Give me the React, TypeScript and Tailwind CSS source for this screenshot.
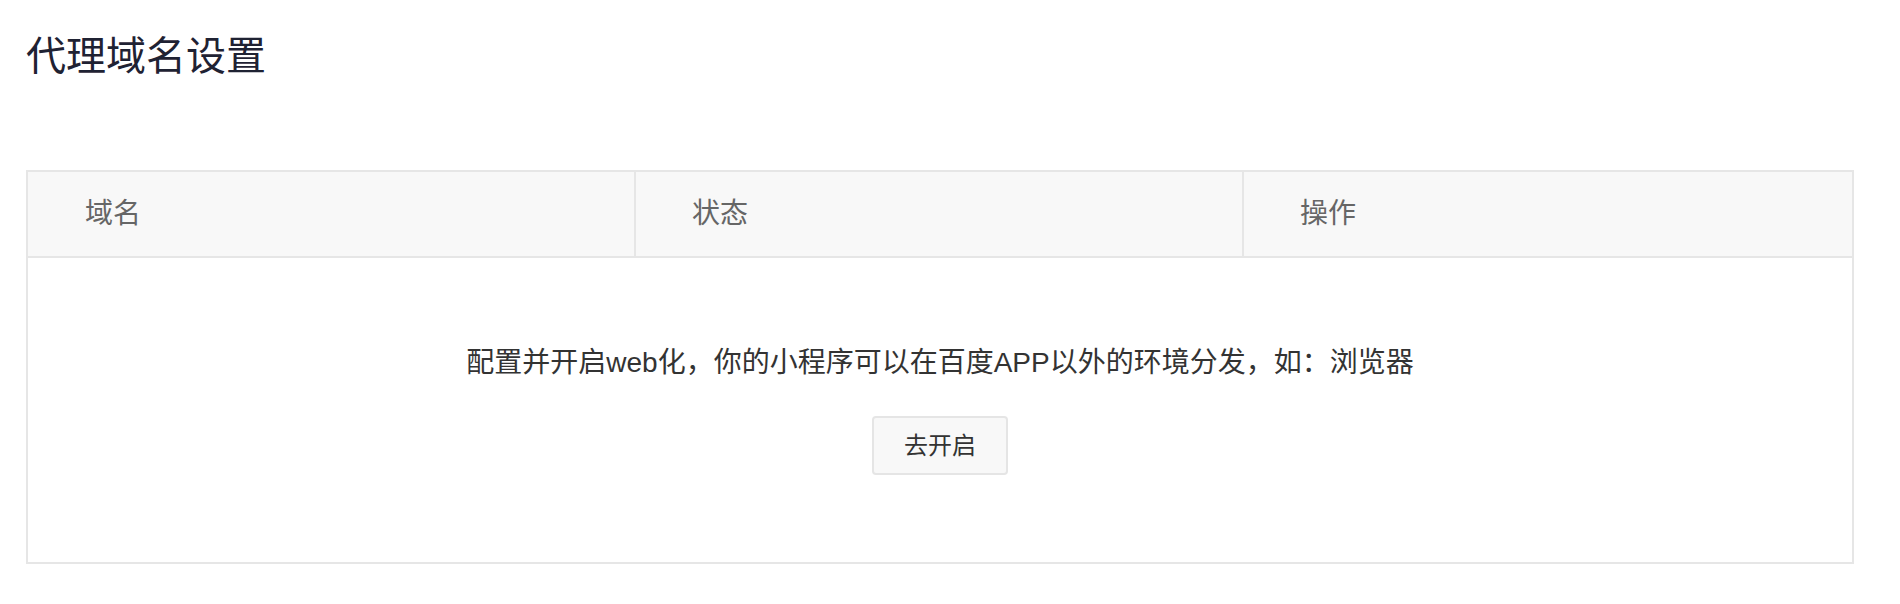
export default function App() {
  const font = { fontFamily: '"Liberation Sans", "Noto Sans CJK SC", sans-serif' };
  return (
    <div className="w-full h-[604px] bg-white" style={font}>
      <div className="pl-[26px] pt-[36px]">
        <h1 className="text-[40px] leading-[40px] text-[#1f2233] font-normal">代理域名设置</h1>
        <div className="mt-[94px] w-[1828px] border-2 border-[#e6e6e6]">
          <div className="grid grid-cols-3 h-[86px] bg-[#f8f8f8] border-b-2 border-[#e6e6e6] text-[28px] text-[#666]">
            <div className="flex items-center pl-[57px] border-r-2 border-[#e6e6e6]">域名</div>
            <div className="flex items-center pl-[56px] border-r-2 border-[#e6e6e6]">状态</div>
            <div className="flex items-center pl-[56px]">操作</div>
          </div>
          <div className="h-[304px] flex flex-col items-center pt-[91px]">
            <p className="text-[28px] leading-[28px] text-[#333]">
              配置并开启web化，你的小程序可以在百度APP以外的环境分发，如：浏览器
            </p>
            <button className="mt-[39px] w-[136px] h-[59px] rounded-[4px] border-2 border-[#e5e5e5] bg-[#f8f8f8] text-[24px] text-[#333]">
              去开启
            </button>
          </div>
        </div>
      </div>
    </div>
  );
}
